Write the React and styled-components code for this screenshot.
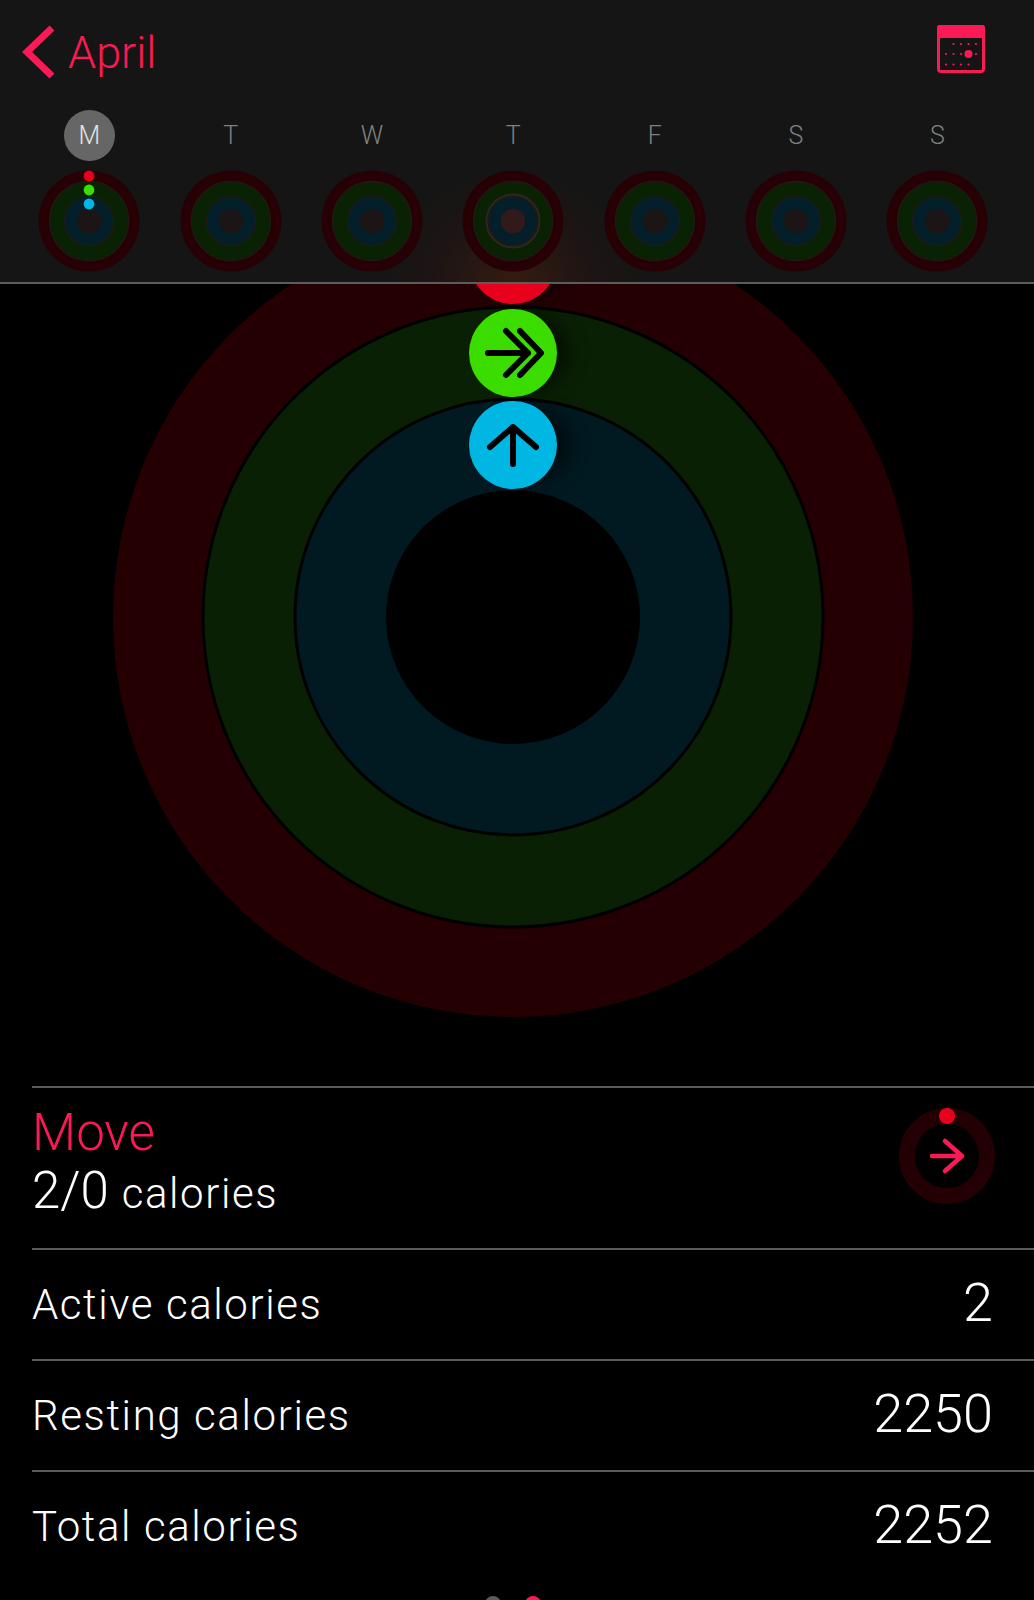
import React from 'react'
import styled, { createGlobalStyle } from 'styled-components'

const PINK = '#fb1a55'
const RED = '#e9001c'
const GREEN = '#3bdc00'
const BLUE = '#00b7e4'
const DAYS = ['M', 'T', 'W', 'T', 'F', 'S', 'S']

const GlobalStyle = createGlobalStyle`
   html, body {
      margin: 0;
      height: 1600px;
      overflow: hidden;
      background: #000;
   }
   body {
      font-family: Roboto, 'Liberation Sans', sans-serif;
      -webkit-font-smoothing: antialiased;
   }
`

const Page = styled.div`
   width: 1034px;
   height: 1600px;
   overflow: hidden;
   background: #000;
`
const Header = styled.header`
   height: 282px;
   border-bottom: 2px solid #5c5c5c;
   background:
      radial-gradient(ellipse 130px 115px at 513px 100%, rgba(96, 36, 8, 0.42), rgba(60, 20, 16, 0.2) 60%, rgba(21, 21, 21, 0) 100%),
      #151515;
`
const TopBar = styled.div`
   height: 110px;
   display: flex;
   align-items: flex-start;
   justify-content: space-between;
   padding: 25px 49px 0 22px;
   box-sizing: border-box;
`
const BackLink = styled.div`
   display: flex;
   align-items: center;
   gap: 13px;
   height: 54px;
   color: ${PINK};
   font-size: 45px;
   font-weight: 300;
`
const DayGrid = styled.div`
   display: grid;
   grid-template-columns: repeat(7, 141.33px);
   padding-left: 18.7px;
`
const DayColumn = styled.div`
   display: flex;
   flex-direction: column;
   align-items: center;
   gap: 9px;
`
const DayLetter = styled.div`
   width: 51px;
   height: 51px;
   border-radius: 50%;
   display: flex;
   align-items: center;
   justify-content: center;
   font-size: 25px;
   font-weight: 300;
   color: ${({ $active }) => ($active ? '#e4e4e4' : '#808080')};
   background: ${({ $active }) => ($active ? '#666' : 'transparent')};
`
const RingStage = styled.section`
   height: 802px;
   overflow: hidden;
`
const BigRings = styled.svg`
   display: block;
   margin: -67px 0 0 113px;
   overflow: visible;
`
const List = styled.div`
   padding-left: 32px;
`
const MoveRow = styled.div`
   height: 150px;
   padding: 10px 39px 0 0;
   border-top: 2px solid #5c5c5c;
   display: flex;
   justify-content: space-between;
   align-items: flex-start;
`
const MoveText = styled.div`
   margin-top: 6px;
`
const MoveTitle = styled.div`
   color: ${PINK};
   font-size: 51px;
   font-weight: 300;
   line-height: 58px;
`
const MoveValue = styled.div`
   color: #fff;
   font-size: 51px;
   font-weight: 300;
   line-height: 58px;
   span {
      font-size: 42px;
      letter-spacing: 1.6px;
      margin-left: 1px;
   }
`
const Row = styled.div`
   height: 109px;
   border-top: 2px solid #5c5c5c;
   display: flex;
   justify-content: space-between;
   align-items: center;
   padding-right: 41px;
   color: #fff;
   font-weight: 300;
`
const RowLabel = styled.span`
   font-size: 42px;
   letter-spacing: 1.6px;
`
const RowValue = styled.span`
   font-size: 54px;
   margin-top: -4px;
`
const Pager = styled.div`
   display: flex;
   justify-content: center;
   gap: 24px;
   padding: 15px 8px 0 0;
`
const PagerDot = styled.span`
   width: 16px;
   height: 16px;
   border-radius: 50%;
   background: ${({ $active }) => ($active ? PINK : '#5c5c5c')};
`

const Chevron = () => (
   <svg width="33" height="54" viewBox="0 0 33 54">
      <path d="M30 3 L5 27 L30 51" fill="none" stroke={PINK} strokeWidth="7" />
   </svg>
)

const CalendarIcon = () => (
   <svg width="48" height="48" viewBox="0 0 48 48">
      <rect x="1.5" y="1.5" width="45" height="45" rx="2.5" fill="none" stroke={PINK} strokeWidth="3" />
      <rect x="0" y="0" width="48" height="13" rx="2.5" fill={PINK} />
      <g fill={PINK}>
         {[16.5, 24, 31.5, 39].map((x) => <circle key={x} cx={x} cy="19" r="1.1" />)}
         {[9, 16.5, 24, 39].map((x) => <circle key={x} cx={x} cy="29" r="1.1" />)}
         <circle cx="31.5" cy="29" r="4" />
         {[9, 16.5, 24, 31.5].map((x) => <circle key={x} cx={x} cy="39.5" r="1.1" />)}
      </g>
   </svg>
)

const DayRings = ({ dots, current }) => (
   <svg width="102" height="102" viewBox="-51 -51 102 102">
      <circle r="50.5" fill="#260005" />
      <circle r="39.7" fill="#0a2204" stroke="#241815" strokeWidth="1.2" />
      {current && <circle r="26.5" fill="none" stroke="#33241e" strokeWidth="2" />}
      <circle r="24.5" fill="#021f2a" stroke="#241819" strokeWidth="1.2" />
      <circle r="12.3" fill={current ? '#331a1a' : '#1c1515'} />
      {dots && (
         <g>
            <circle cy="-45" r="5.4" fill={RED} />
            <circle cy="-31" r="5.4" fill={GREEN} />
            <circle cy="-17" r="5.4" fill={BLUE} />
         </g>
      )}
   </svg>
)

const Ball = ({ cy, color, children }) => (
   <g>
      <circle cx="420" cy={cy} r="36" fill="#000" opacity="0.55" filter="url(#ballShadow)" />
      <circle cx="400" cy={cy} r="44" fill={color} />
      <g
         transform={`translate(400 ${cy})`}
         fill="none"
         stroke="#000"
         strokeWidth="6"
         strokeLinecap="round"
         strokeLinejoin="round"
      >
         {children}
      </g>
   </g>
)

const ActivityRings = () => (
   <BigRings width="800" height="800" viewBox="0 0 800 800">
      <defs>
         <filter id="ballShadow" x="-50%" y="-50%" width="200%" height="200%">
            <feGaussianBlur stdDeviation="10" />
         </filter>
      </defs>
      <circle cx="400" cy="400" r="400" fill="#250003" />
      <circle cx="400" cy="400" r="310" fill="#0a2004" stroke="#000" strokeWidth="3" />
      <circle cx="400" cy="400" r="218" fill="#011921" stroke="#000" strokeWidth="3" />
      <circle cx="400" cy="400" r="127" fill="#000" />
      <Ball cy={43} color={RED} />
      <Ball cy={136} color={GREEN}>
         <path d="M-25 0 H15 M-7 -22 L15 0 L-7 22 M7 -22 L28 0 L7 22" />
      </Ball>
      <Ball cy={228} color={BLUE}>
         <path d="M0 19 V-18 M-23 2 L0 -18 L23 2" />
      </Ball>
   </BigRings>
)

const MoveRing = () => (
   <svg width="96" height="106" viewBox="-48 -58 96 106">
      <circle r="40" fill="none" stroke="#230003" strokeWidth="16" />
      <circle cy="-40" r="8" fill={RED} />
      <path
         d="M-15 0 H15 M-2 -15 L15 0 L-2 15"
         fill="none"
         stroke={PINK}
         strokeWidth="4.5"
         strokeLinecap="round"
         strokeLinejoin="round"
      />
   </svg>
)

const App = () => {
   return (
      <Page>
         <GlobalStyle />
         <Header>
            <TopBar>
               <BackLink>
                  <Chevron />
                  April
               </BackLink>
               <CalendarIcon />
            </TopBar>
            <DayGrid>
               {DAYS.map((day, index) => (
                  <DayColumn key={index}>
                     <DayLetter $active={index === 0}>{day}</DayLetter>
                     <DayRings dots={index === 0} current={index === 3} />
                  </DayColumn>
               ))}
            </DayGrid>
         </Header>
         <RingStage>
            <ActivityRings />
         </RingStage>
         <List>
            <MoveRow>
               <MoveText>
                  <MoveTitle>Move</MoveTitle>
                  <MoveValue>2/0<span> calories</span></MoveValue>
               </MoveText>
               <MoveRing />
            </MoveRow>
            <Row><RowLabel>Active calories</RowLabel><RowValue>2</RowValue></Row>
            <Row><RowLabel>Resting calories</RowLabel><RowValue>2250</RowValue></Row>
            <Row><RowLabel>Total calories</RowLabel><RowValue>2252</RowValue></Row>
         </List>
         <Pager>
            <PagerDot />
            <PagerDot $active />
         </Pager>
      </Page>
   )
}

export default App
